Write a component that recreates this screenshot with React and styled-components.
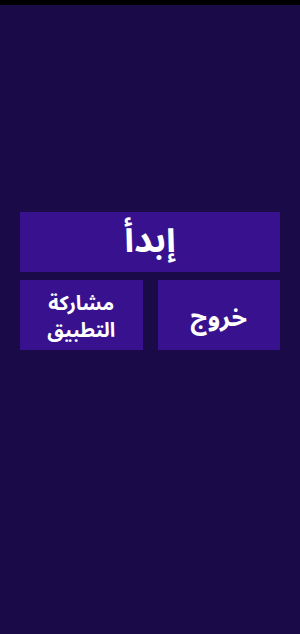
import React from 'react';
import styled, { createGlobalStyle } from 'styled-components';

const GlobalStyle = createGlobalStyle`
  html, body {
    margin: 0;
    padding: 0;
    background: #1a0b48;
  }
  * {
    box-sizing: border-box;
  }
`;

const Screen = styled.div`
  width: 300px;
  height: 634px;
  background: #1a0b48;
  display: flex;
  flex-direction: column;
  font-family: "Noto Sans Arabic", "DejaVu Sans", sans-serif;
`;

const StatusBar = styled.div`
  height: 5px;
  background: #000;
  flex-shrink: 0;
`;

const Menu = styled.div`
  flex: 1;
  display: flex;
  flex-direction: column;
  justify-content: center;
  gap: 8px;
  padding: 0 20px 78px;
`;

const Row = styled.div`
  display: flex;
  gap: 15px;
`;

const MenuButton = styled.button`
  flex: 1;
  height: ${(p) => p.$h}px;
  border: none;
  border-radius: 0;
  background: #38128e;
  color: #fff;
  font-family: inherit;
  font-weight: bold;
  font-size: ${(p) => p.$size}px;
  line-height: ${(p) => p.$lh || 1.2};
  direction: rtl;
  display: flex;
  align-items: center;
  justify-content: center;
  text-align: center;
  padding: ${(p) => p.$pt || 0}px 6px 0;
  cursor: pointer;
`;

export default function App() {
  return (
    <>
      <GlobalStyle />
      <Screen>
        <StatusBar />
        <Menu>
          <Row>
            <MenuButton $h={60} $size={36}>إبدأ</MenuButton>
          </Row>
          <Row>
            <MenuButton $h={70} $size={20} $lh={1.35} $pt={6}>
              مشاركة
              <br />
              التطبيق
            </MenuButton>
            <MenuButton $h={70} $size={25} $pt={6}>خروج</MenuButton>
          </Row>
        </Menu>
      </Screen>
    </>
  );
}
